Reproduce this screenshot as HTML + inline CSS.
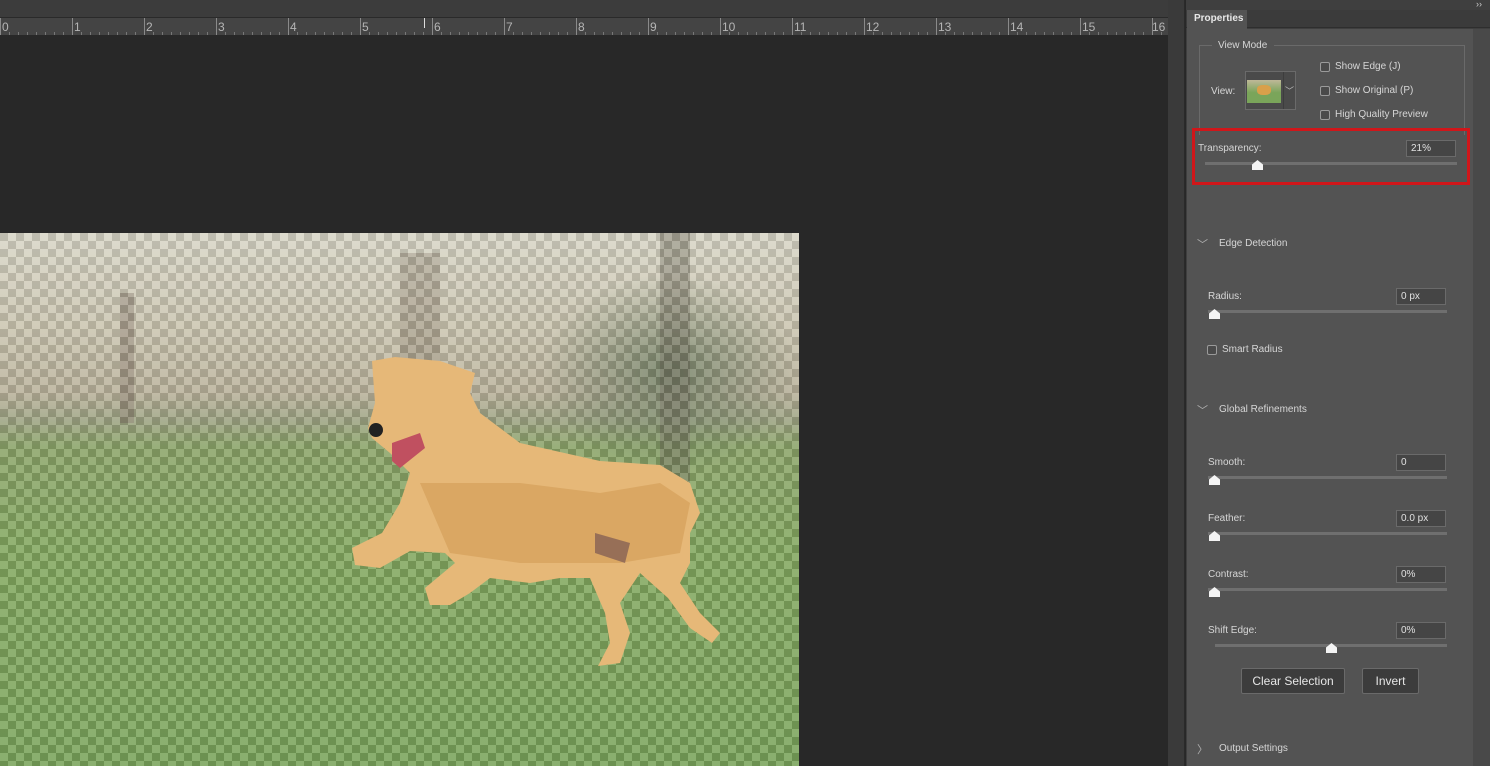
<!DOCTYPE html>
<html><head><style>
*{margin:0;padding:0;box-sizing:border-box}
body{width:1490px;height:766px;overflow:hidden;background:#282828;font-family:"Liberation Sans",sans-serif;position:relative}
.a{position:absolute}
.t{position:absolute;color:#d6d6d6;font-size:10px;white-space:nowrap}
.inp{position:absolute;background:#454545;border:1px solid #6a6a6a;color:#e0e0e0;font-size:10px;padding:2px 4px;height:17px;width:50px}
.trk{position:absolute;height:3px;background:#6f6f6f}
.th{position:absolute;width:11px;height:10px;background:#f4f4f4;clip-path:polygon(50% 0,100% 45%,100% 100%,0 100%,0 45%)}
.cb{position:absolute;width:10px;height:10px;border:1px solid #9a9a9a;border-radius:2px;background:#4a4a4a}
.btn{position:absolute;background:#3c3c3c;border:1px solid #6a6a6a;border-radius:2px;color:#e6e6e6;font-size:12px;text-align:center;line-height:24px;height:26px}
.chev{position:absolute;color:#b0b0b0;font-size:11px}
</style></head><body>
<div class="a" style="left:0;top:0;width:1168px;height:18px;background:#3c3c3c;border-bottom:1px solid #2a2a2a"></div>
<div class="a" style="left:0;top:18px;width:1168px;height:17px;background:#444;background-image:repeating-linear-gradient(90deg,#777 0 1px,transparent 1px 9px);background-size:9px 3px;background-repeat:repeat-x;background-position:0 14px"></div>
<div class="a" style="left:0;top:18px;width:1168px;height:17px;background-image:repeating-linear-gradient(90deg,#8a8a8a 0 1px,transparent 1px 72px);"></div>
<div style="position:absolute;top:20px;left:0;color:#b5b5b5;font-size:12px">
<span class="a" style="left:2px">0</span><span class="a" style="left:74px">1</span><span class="a" style="left:146px">2</span><span class="a" style="left:218px">3</span><span class="a" style="left:290px">4</span><span class="a" style="left:362px">5</span><span class="a" style="left:434px">6</span><span class="a" style="left:506px">7</span><span class="a" style="left:578px">8</span><span class="a" style="left:650px">9</span><span class="a" style="left:722px">10</span><span class="a" style="left:794px">11</span><span class="a" style="left:866px">12</span><span class="a" style="left:938px">13</span><span class="a" style="left:1010px">14</span><span class="a" style="left:1082px">15</span><span class="a" style="left:1152px">16</span></div>
<div class="a" style="left:424px;top:18px;width:1px;height:10px;background:#ddd"></div>

<div class="a" style="left:0;top:233px;width:799px;height:533px;overflow:hidden;background:linear-gradient(180deg,#d6d4c4 0%,#c8c2ac 18%,#b6ae96 30%,#9aa07e 35%,#86a062 40%,#7da358 60%,#74a054 100%)">
 <div class="a" style="left:540px;top:40px;width:260px;height:200px;background:radial-gradient(ellipse at 50% 50%,rgba(85,105,75,.75),transparent 70%)"></div>
 <div class="a" style="left:120px;top:60px;width:14px;height:130px;background:rgba(120,105,90,.45)"></div>
 <div class="a" style="left:400px;top:20px;width:40px;height:160px;background:rgba(120,105,90,.35)"></div>
 <div class="a" style="left:660px;top:0;width:30px;height:250px;background:rgba(100,95,80,.45)"></div>
 <div class="a" style="left:0;top:0;width:799px;height:533px;opacity:.16;background-image:conic-gradient(#fff 25%,#444 0 50%,#fff 0 75%,#444 0);background-size:16px 16px"></div>
 <svg class="a" style="left:0;top:0" width="799" height="533">
  <path d="M372 128 L395 124 L440 128 L475 140 L470 160 L480 180 L520 210 L600 228 L660 232 L690 250 L700 280 L690 300 L690 330 L680 350 L700 380 L720 400 L712 410 L690 395 L668 365 L640 340 L620 370 L630 400 L620 430 L598 433 L610 410 L605 380 L590 345 L560 345 L530 350 L490 345 L470 360 L450 372 L430 372 L425 355 L455 330 L445 320 L410 318 L380 335 L355 332 L352 315 L382 300 L400 270 L410 240 L390 220 L372 205 L368 195 L375 170 Z" fill="#e6b878"/>
  <path d="M420 250 L520 250 L600 260 L660 250 L690 270 L680 320 L620 330 L520 330 L450 320 Z" fill="#d4a05a" opacity=".7"/>
  <circle cx="376" cy="197" r="7" fill="#222"/>
  <path d="M392 210 L420 200 L425 215 L400 235 L392 228 Z" fill="#c05060"/>
  <path d="M595 300 L630 310 L625 330 L595 320 Z" fill="#6a4a50" opacity=".6"/>
 </svg>
</div>

<div class="a" style="left:1168px;top:0;width:17px;height:766px;background:#3a3a3a;border-right:1px solid #2a2a2a"></div>
<div class="a" style="left:1186px;top:0;width:304px;height:766px;background:#3f3f3f"></div>
<div class="a" style="left:1186px;top:10px;width:304px;height:18px;background:#3b3b3b;border-bottom:1px solid #2e2e2e"></div>
<div class="t" style="left:1476px;top:-1px;font-size:9px;color:#ccc">››</div>
<div class="a" style="left:1187px;top:10px;width:60px;height:19px;background:#535353"></div>
<div class="t" style="left:1194px;top:13px;font-weight:bold;color:#e8e8e8">Properties</div>
<div class="a" style="left:1187px;top:29px;width:286px;height:737px;background:#535353"></div>
<div class="a" style="left:1473px;top:29px;width:17px;height:737px;background:#494949"></div>

<div class="a" style="left:1199px;top:45px;width:266px;height:90px;border:1px solid #6a6a6a;border-bottom:none"></div>
<div class="a" style="left:1212px;top:40px;width:62px;height:10px;background:#535353"></div>
<div class="t" style="left:1218px;top:40px">View Mode</div>
<div class="t" style="left:1211px;top:86px">View:</div>
<div class="a" style="left:1245px;top:71px;width:51px;height:39px;border:1px solid #6a6a6a;background:#4a4a4a"></div>
<div class="a" style="left:1247px;top:80px;width:34px;height:23px;background:linear-gradient(180deg,#bfb898,#7aa55a 55%)"></div>
<div class="a" style="left:1257px;top:85px;width:14px;height:10px;background:#d9a04a;border-radius:40%"></div>
<div class="a" style="left:1283px;top:72px;width:1px;height:37px;background:#3d3d3d"></div>
<div class="t" style="left:1285px;top:84px;color:#bbb;font-size:9px">﹀</div>
<div class="cb" style="left:1320px;top:62px"></div><div class="t" style="left:1335px;top:61px">Show Edge (J)</div>
<div class="cb" style="left:1320px;top:86px"></div><div class="t" style="left:1335px;top:85px">Show Original (P)</div>
<div class="cb" style="left:1320px;top:110px"></div><div class="t" style="left:1335px;top:109px">High Quality Preview</div>

<div class="a" style="left:1192px;top:128px;width:278px;height:57px;border:3px solid #d0161a"></div>
<div class="t" style="left:1198px;top:143px">Transparency:</div>
<div class="inp" style="left:1406px;top:140px">21%</div>
<div class="trk" style="left:1205px;top:162px;width:252px"></div>
<div class="th" style="left:1252px;top:160px"></div>

<div class="chev" style="left:1197px;top:236px">﹀</div>
<div class="t" style="left:1219px;top:238px">Edge Detection</div>
<div class="t" style="left:1208px;top:291px">Radius:</div>
<div class="inp" style="left:1396px;top:288px">0 px</div>
<div class="trk" style="left:1208px;top:310px;width:239px"></div>
<div class="th" style="left:1209px;top:309px"></div>
<div class="cb" style="left:1207px;top:345px"></div><div class="t" style="left:1222px;top:344px">Smart Radius</div>

<div class="chev" style="left:1197px;top:402px">﹀</div>
<div class="t" style="left:1219px;top:404px">Global Refinements</div>

<div class="t" style="left:1208px;top:457px">Smooth:</div><div class="inp" style="left:1396px;top:454px">0</div>
<div class="trk" style="left:1208px;top:476px;width:239px"></div><div class="th" style="left:1209px;top:475px"></div>
<div class="t" style="left:1208px;top:513px">Feather:</div><div class="inp" style="left:1396px;top:510px">0.0 px</div>
<div class="trk" style="left:1208px;top:532px;width:239px"></div><div class="th" style="left:1209px;top:531px"></div>
<div class="t" style="left:1208px;top:569px">Contrast:</div><div class="inp" style="left:1396px;top:566px">0%</div>
<div class="trk" style="left:1208px;top:588px;width:239px"></div><div class="th" style="left:1209px;top:587px"></div>
<div class="t" style="left:1208px;top:625px">Shift Edge:</div><div class="inp" style="left:1396px;top:622px">0%</div>
<div class="trk" style="left:1215px;top:644px;width:232px"></div><div class="th" style="left:1326px;top:643px"></div>

<div class="btn" style="left:1241px;top:668px;width:104px">Clear Selection</div>
<div class="btn" style="left:1362px;top:668px;width:57px">Invert</div>

<div class="chev" style="left:1197px;top:741px">〉</div>
<div class="t" style="left:1219px;top:743px">Output Settings</div>
</body></html>
